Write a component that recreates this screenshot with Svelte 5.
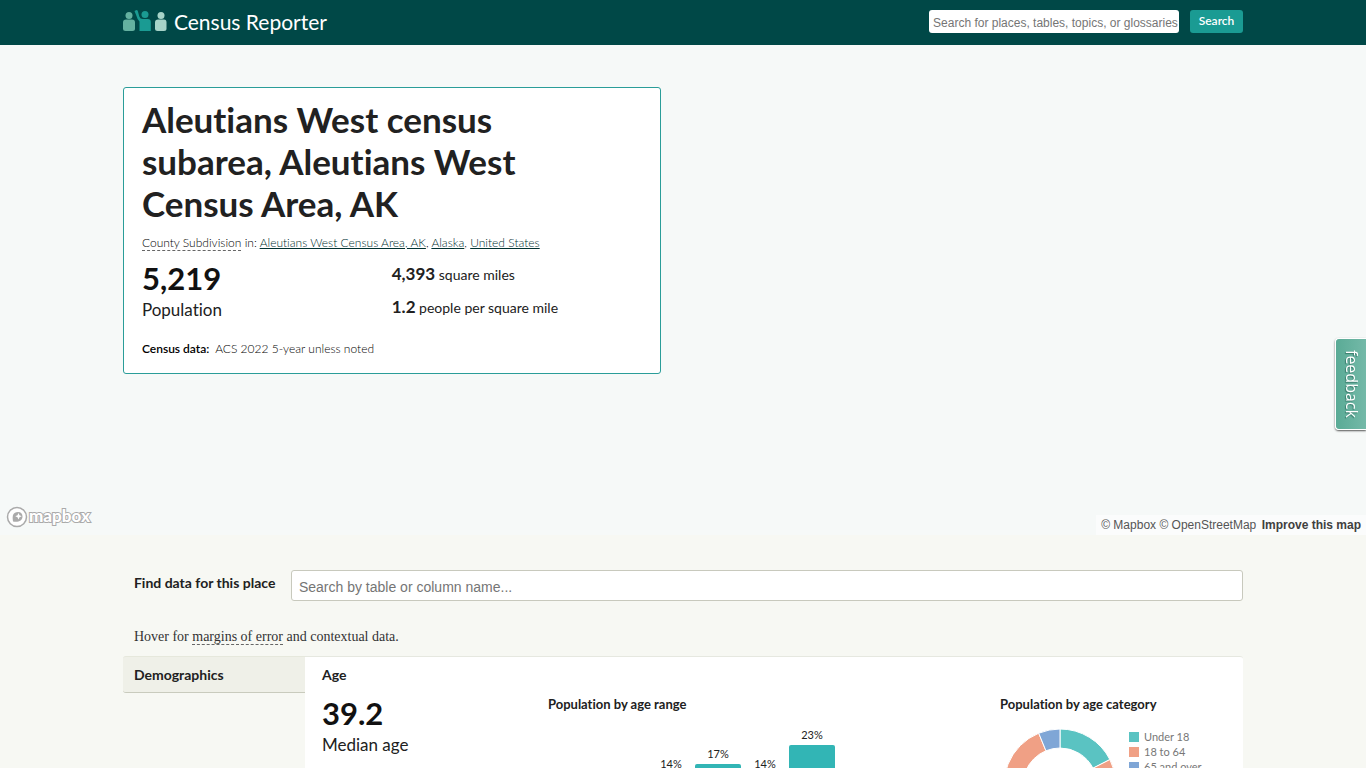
<script>
    const parents = ["Aleutians West Census Area, AK", "Alaska", "United States"];

    // column is the position of the age decade along the axis
    const ageRanges = [
        { column: 3, label: "14%", height: 44 },
        { column: 4, label: "17%", height: 54 },
        { column: 5, label: "14%", height: 44 },
        { column: 6, label: "23%", height: 73 },
    ];

    const ageCategories = [
        { name: "Under 18", value: 17.5, color: "#5ac3c2" },
        { name: "18 to 64", value: 76.3, color: "#f0a085" },
        { name: "65 and over", value: 6.2, color: "#7fa6d6" },
    ];

    function point(share, radius) {
        const angle = (share / 100) * 2 * Math.PI;
        return `${56 + radius * Math.sin(angle)} ${56 - radius * Math.cos(angle)}`;
    }

    function slicePath(start, value) {
        const end = start + value;
        const large = value > 50 ? 1 : 0;
        return `M${point(start, 56)} A56 56 0 ${large} 1 ${point(end, 56)} L${point(end, 37)} A37 37 0 ${large} 0 ${point(start, 37)} Z`;
    }

    let total = 0;
    const slices = ageCategories.map((category) => {
        const path = slicePath(total, category.value);
        total += category.value;
        return { ...category, path };
    });
</script>

<div class="page">
    <header>
        <div class="wrapper header-row">
            <a class="brand" href="/">
                <svg width="44" height="24" viewBox="0 0 44 24" aria-hidden="true">
                    <g fill="#64b1a0">
                        <circle cx="6" cy="5.500" r="3.500" />
                        <path d="M3 9.500h6q3 0 3 3v6q0 2.500-2.500 2.500h-7Q0 21 0 18.500v-6q0-3 3-3z" />
                    </g>
                    <g fill="#1a9b93">
                        <circle cx="22" cy="4.500" r="3.500" />
                        <path d="M11.500 1l2-1q1 0 1.300 1l1.500 5.500q.800 2.500 3.500 2.500h5q3 0 3 3v9H16.500v-9.500q-2-1.500-3-5.500z" />
                    </g>
                    <g fill="#a6d3c8">
                        <circle cx="38" cy="5.500" r="3.500" />
                        <path d="M35 9.500h6q2.500 0 2.500 3v6q0 2.500-2.500 2.500h-6.500q-2.500 0-2.500-2.500v-6q0-3 3-3z" />
                    </g>
                </svg>
                <span>Census Reporter</span>
            </a>
            <form class="site-search" on:submit|preventDefault>
                <input
                    type="text"
                    aria-label="Search"
                    placeholder="Search for places, tables, topics, or glossaries"
                />
                <button type="submit">Search</button>
            </form>
        </div>
    </header>

    <section class="map">
        <div class="wrapper">
            <div class="place-card">
                <h1>Aleutians West census subarea, Aleutians West Census Area, AK</h1>
                <p class="hierarchy">
                    <span class="glossary">County Subdivision</span> in:
                    {#each parents as parent, i}<a href="/">{parent}</a>{i < parents.length - 1 ? ", " : ""}{/each}
                </p>
                <div class="facts">
                    <div class="population">
                        <strong class="big">5,219</strong>
                        <span class="caption">Population</span>
                    </div>
                    <div class="areas">
                        <p><strong>4,393</strong> square miles</p>
                        <p><strong>1.2</strong> people per square mile</p>
                    </div>
                </div>
                <p class="release"><strong>Census data:</strong> ACS 2022 5-year unless noted</p>
            </div>
        </div>
        <a class="mapbox" href="/" aria-label="mapbox">
            <svg width="90" height="24" viewBox="0 0 90 24">
                <circle cx="11" cy="12" r="9.500" fill="#fff" stroke="#aaa" stroke-width="1.500" />
                <path
                    d="M7 16.500c-1-6 0-9.500 5-9.500 3 0 4.500 2 4.500 4.500 0 4.500-4.500 6-9.500 5z"
                    fill="#aaa"
                />
                <path d="M12.500 8l1 2.200 2.200 1-2.200 1-1 2.200-1-2.200-2.200-1 2.200-1z" fill="#fff" />
                <text x="23" y="17">mapbox</text>
            </svg>
        </a>
        <div class="attribution">
            <a href="/">© Mapbox</a>
            <a href="/">© OpenStreetMap</a>
            <a class="improve" href="/">Improve this map</a>
        </div>
    </section>

    <main class="wrapper">
        <div class="table-search">
            <label for="table-search">Find data for this place</label>
            <input id="table-search" type="text" placeholder="Search by table or column name..." />
        </div>
        <p class="hint">
            Hover for <span class="glossary">margins of error</span> and contextual data.
        </p>

        <div class="profile">
            <h2>Demographics</h2>
            <section class="panel">
                <h3>Age</h3>
                <div class="charts">
                    <div>
                        <strong class="big">39.2</strong>
                        <span class="caption">Median age</span>
                    </div>
                    <div>
                        <h4>Population by age range</h4>
                        <div class="columns">
                            {#each ageRanges as range}
                                <div class="column" style="grid-column: {range.column}">
                                    <span>{range.label}</span>
                                    <div class="bar" style="height: {range.height}px"></div>
                                </div>
                            {/each}
                        </div>
                    </div>
                    <div>
                        <h4>Population by age category</h4>
                        <div class="donut">
                            <svg width="112" height="112" viewBox="0 0 112 112">
                                {#each slices as slice}
                                    <path d={slice.path} fill={slice.color} stroke="#fff" />
                                {/each}
                            </svg>
                            <ul>
                                {#each ageCategories as category}
                                    <li>
                                        <i style="background: {category.color}"></i>{category.name}
                                    </li>
                                {/each}
                            </ul>
                        </div>
                    </div>
                </div>
            </section>
        </div>
    </main>

    <button class="feedback">feedback</button>
</div>

<style>
    :global(body) {
        background: #f7f8f3;
    }

    h1,
    h2,
    h3,
    h4,
    p,
    ul {
        margin: 0;
        padding: 0;
    }

    .page {
        height: 100vh;
        overflow: hidden;
        color: #212121;
        font-family: Lato, sans-serif;
        font-size: 12px;
        font-variant-ligatures: none;
        line-height: 20px;
    }

    .wrapper {
        width: 82%;
        margin: 0 auto;
    }

    header {
        background: #004847;
    }

    .header-row {
        display: flex;
        justify-content: space-between;
        align-items: center;
        height: 45px;
    }

    .brand {
        display: flex;
        align-items: center;
        gap: 7px;
        padding-bottom: 2px;
        color: #fff;
        font-size: 21px;
        text-decoration: none;
    }

    .site-search {
        display: flex;
        gap: 11px;
        margin-bottom: 2px;
    }

    .site-search input {
        box-sizing: border-box;
        width: 250px;
        height: 23px;
        padding: 2px 0 0 4px;
        border: 0;
        border-radius: 3px;
        font: 12px "Liberation Sans", Arial, sans-serif;
    }

    input::placeholder {
        color: #757575;
    }

    .site-search button {
        width: 53px;
        height: 23px;
        padding: 0 0 2px;
        border: 0;
        border-radius: 3px;
        background: #1a9b93;
        color: #fff;
        font: 600 12px Lato, sans-serif;
    }

    .map {
        position: relative;
        box-sizing: border-box;
        height: 490px;
        padding-top: 42px;
        background: #f6f9f8;
    }

    .place-card {
        box-sizing: border-box;
        width: 48%;
        padding: 10px 18px 14px;
        border: 1px solid #2a9d99;
        border-radius: 3px;
        background: #fff;
    }

    h1 {
        max-width: 400px;
        font-size: 35px;
        line-height: 42px;
    }

    .hierarchy {
        padding-top: 9px;
        color: #000;
        font-weight: 300;
    }

    .hierarchy a {
        color: #003030;
    }

    .glossary {
        border-bottom: 1px dashed #666;
    }

    .facts {
        display: grid;
        grid-template-columns: 1fr 1fr;
        padding-top: 5px;
    }

    .population {
        padding-top: 3px;
    }

    .big {
        display: block;
        color: #111;
        font-size: 31px;
        line-height: 34px;
    }

    .caption {
        display: block;
        font-size: 17px;
        line-height: 30px;
    }

    .areas {
        font-size: 14px;
        line-height: 33px;
    }

    .areas strong {
        font-size: 17px;
        line-height: 20px;
    }

    .release {
        padding-top: 14px;
        color: #000;
        font-weight: 300;
    }

    .release strong {
        margin-right: 3px;
        font-weight: 600;
    }

    .mapbox {
        position: absolute;
        left: 6px;
        bottom: 6px;
        height: 24px;
    }

    .mapbox text {
        fill: #fff;
        stroke: #aaa;
        stroke-width: 2px;
        paint-order: stroke;
        font: 900 17px Lato, sans-serif;
    }

    .attribution {
        position: absolute;
        right: 0;
        bottom: 0;
        padding: 0 5px;
        background: rgba(255, 255, 255, 0.5);
        font: 12px/20px "Liberation Sans", Arial, sans-serif;
    }

    .attribution a {
        color: #555;
        text-decoration: none;
    }

    .attribution .improve {
        margin-left: 2px;
        color: #404040;
        font-weight: bold;
    }

    .table-search {
        display: flex;
        padding-top: 35px;
    }

    .table-search label {
        width: 168px;
        padding: 3px 0 0 11px;
        box-sizing: border-box;
        font-size: 14px;
        font-weight: bold;
    }

    .table-search input {
        flex: 1;
        box-sizing: border-box;
        height: 31px;
        padding: 3px 7px 0;
        border: 1px solid #c8c9bd;
        border-radius: 3px;
        font: 14px "Liberation Sans", Arial, sans-serif;
    }

    .hint {
        padding: 26px 0 9px 11px;
        color: #333;
        font-family: "Liberation Serif", serif;
        font-size: 14px;
    }

    .profile {
        display: flex;
        align-items: flex-start;
    }

    h2 {
        box-sizing: border-box;
        width: 182px;
        height: 37px;
        border-top: 1px solid #e6e8dc;
        border-bottom: 1px solid #c9cbbd;
        border-radius: 3px 0 0 3px;
        background: #eff0e8;
        font-size: 14px;
        line-height: 36px;
        text-indent: 11px;
    }

    .panel {
        flex: 1;
        padding: 8px 17px 40px;
        border-top: 1px solid #e6e8e0;
        border-radius: 0 3px 0 0;
        background: #fff;
    }

    h3 {
        font-size: 14px;
    }

    .charts {
        display: grid;
        grid-template-columns: 25% 50% 25%;
        padding-top: 11px;
    }

    h4 {
        font-size: 13px;
        line-height: 16px;
    }

    .columns {
        display: grid;
        grid-template-columns: repeat(9, 46px);
        gap: 1px;
        align-items: end;
        height: 106px;
        padding-left: 6px;
    }

    .column {
        text-align: center;
    }

    .column span {
        font-size: 11px;
    }

    .bar {
        border-radius: 2px 2px 0 0;
        background: #32b5b5;
    }

    .donut {
        display: flex;
        gap: 13px;
        padding: 17px 0 0 4px;
    }

    .donut ul {
        color: #777;
        font-size: 11px;
        line-height: 15px;
        list-style: none;
    }

    .donut li {
        display: flex;
        align-items: center;
        gap: 5px;
    }

    .donut i {
        width: 10px;
        height: 10px;
    }

    .feedback {
        position: fixed;
        top: 338px;
        right: 0;
        box-sizing: border-box;
        width: 31px;
        height: 92px;
        padding: 0 0 0 2px;
        border: 1px solid #fff;
        border-right: 0;
        border-radius: 4px 0 0 4px;
        background: linear-gradient(to right, #5aab96, #74b9a8);
        box-shadow: 0 1px 2px #555;
        color: #fff;
        font: 16px "Open Sans", sans-serif;
        text-shadow: 1px 1px 1px #37796a;
        writing-mode: vertical-rl;
    }
</style>
